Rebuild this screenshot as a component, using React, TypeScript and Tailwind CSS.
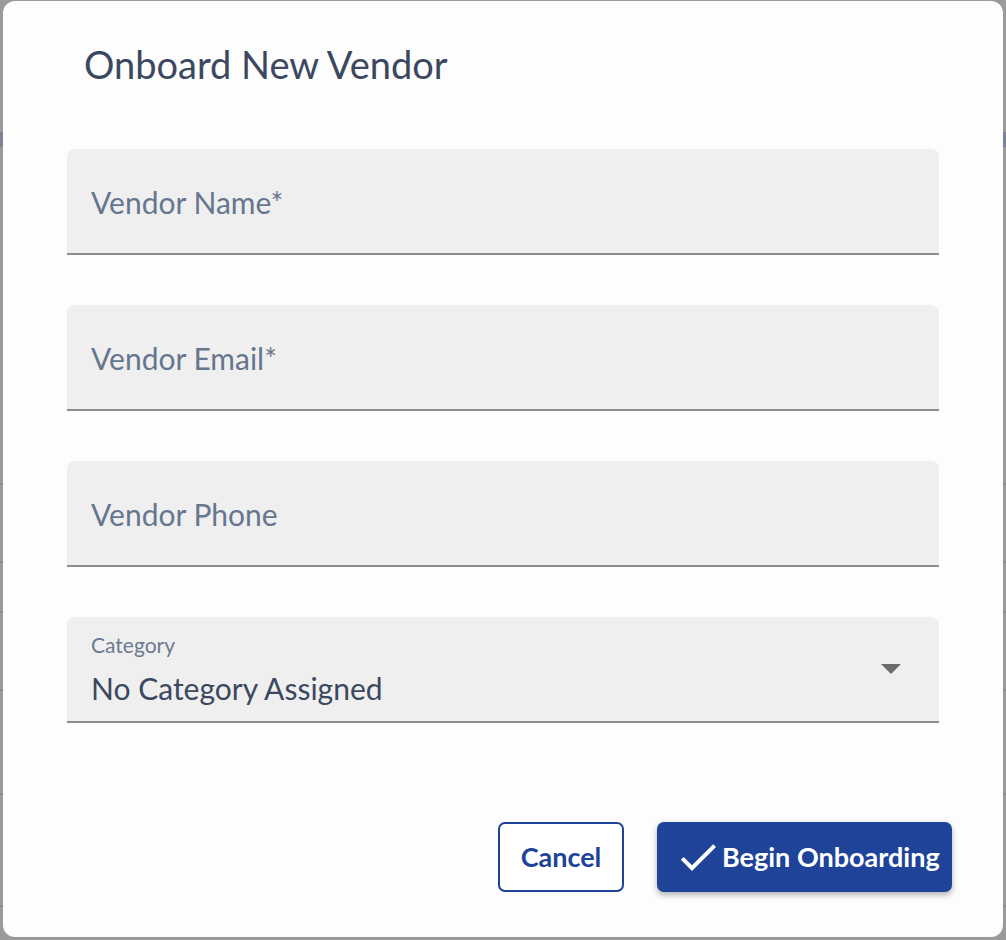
import React from "react";

function Field({ label }: { label: string }) {
  return (
    <div className="h-[106px] w-full rounded-t-[8px] border-b-2 border-[#8c8c8c] bg-[#efefef] flex items-center pl-[24px] pt-[2px]">
      <span className="text-[30px] leading-[36px] text-[#66768e]">{label}</span>
    </div>
  );
}

export default function App() {
  const font = { fontFamily: "Lato, 'Open Sans', sans-serif" };
  return (
    <div className="relative w-[1006px] h-[940px] overflow-hidden bg-[#9a9a9a]" style={font}>
      {/* dimmed page behind */}
      <div className="flex flex-col w-full h-full">
        <div className="h-[132px]" />
        <div className="h-[15px] bg-[#7d8294]" />
        <div className="h-[336px]" />
        <div className="h-[2px] bg-[#8a8a8a]" />
        <div className="h-[76px]" />
        <div className="h-[2px] bg-[#8a8a8a]" />
        <div className="h-[48px]" />
        <div className="h-[2px] bg-[#8a8a8a]" />
        <div className="h-[76px]" />
        <div className="h-[2px] bg-[#8a8a8a]" />
        <div className="h-[102px]" />
        <div className="h-[2px] bg-[#8a8a8a]" />
        <div className="h-[110px]" />
        <div className="h-[2px] bg-[#8a8a8a]" />
      </div>

      {/* modal overlay */}
      <div className="absolute inset-0 pl-[3px] pt-[1px]">
        <div className="w-[1000px] h-[936px] rounded-[12px] bg-[#fdfdfd] flex flex-col pl-[64px] pr-[64px] pt-[40px]">
          <h2 className="pl-[17px] text-[38px] leading-[46px] font-normal text-[#3b4860]">
            Onboard New Vendor
          </h2>

          <div className="mt-[62px] flex flex-col gap-[50px]">
            <Field label="Vendor Name*" />
            <Field label="Vendor Email*" />
            <Field label="Vendor Phone" />
            <div className="h-[106px] w-full rounded-t-[8px] border-b-2 border-[#8c8c8c] bg-[#efefef] flex items-start justify-between pl-[24px] pr-[38px]">
              <div className="flex flex-col pt-[15px]">
                <span className="text-[21px] leading-[26px] text-[#6b7a90]">Category</span>
                <span className="mt-[12px] text-[30px] leading-[36px] text-[#3b4860]">
                  No Category Assigned
                </span>
              </div>
              <svg width="20" height="10" viewBox="0 0 20 10" className="mt-[47px]">
                <polygon points="0,0 20,0 10,10" fill="#6b6b6b" />
              </svg>
            </div>
          </div>

          <div className="mt-[99px] flex justify-end gap-[33px] -mr-[13px]">
            <button className="h-[70px] w-[126px] rounded-[7px] border-2 border-[#1e4399] bg-white text-[#1e4399] text-[27px] font-bold flex items-center justify-center">
              Cancel
            </button>
            <button className="h-[70px] w-[295px] rounded-[7px] bg-[#1e4399] text-white text-[27px] font-bold flex items-center pl-[17px] shadow-[0_3px_6px_rgba(0,0,0,0.3)]">
              <svg width="48" height="48" viewBox="0 0 24 24" fill="white">
                <path d="M9 16.17L4.83 12l-1.42 1.41L9 19 21 7l-1.41-1.41z" />
              </svg>
              <span>Begin Onboarding</span>
            </button>
          </div>
        </div>
      </div>
    </div>
  );
}
